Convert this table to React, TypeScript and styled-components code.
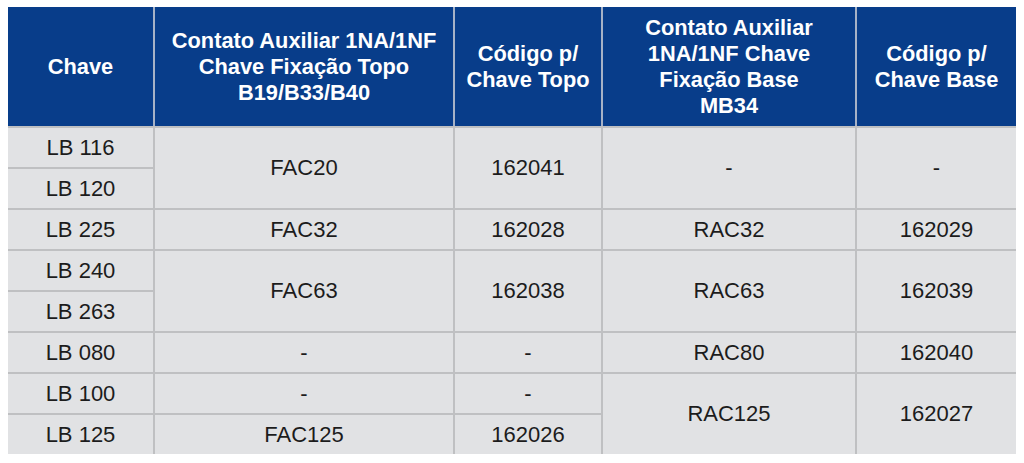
import React from "react";
import styled, { createGlobalStyle } from "styled-components";

const Global = createGlobalStyle`
  html, body { margin: 0; padding: 0; background: #ffffff; }
  body { font-family: "Liberation Sans", Arial, Helvetica, sans-serif; }
`;

const COLS = "145px 298px 146px 252px 159px";

const Page = styled.div`
  padding: 7px 8px 0 8px;
`;

const Table = styled.div`
  width: 1008px;
  display: flex;
  flex-direction: column;
  gap: 2px;
  background: #bfc0c2;
`;

const Head = styled.div`
  display: grid;
  grid-template-columns: ${COLS};
  column-gap: 2px;
  background: #a6b2c7;
`;

const HeadCell = styled.div`
  height: 119px;
  background: #083d8a;
  color: #ffffff;
  font-weight: bold;
  font-size: 21.8px;
  line-height: 26px;
  display: flex;
  align-items: center;
  justify-content: center;
  text-align: center;
`;

const Body = styled.div`
  display: grid;
  grid-template-columns: ${COLS};
  grid-template-rows: repeat(8, 39px);
  gap: 2px;
  background: #bfc0c2;
`;

const Cell = styled.div<{ $col: number; $row: number; $span?: number }>`
  grid-column: ${(p) => p.$col};
  grid-row: ${(p) => p.$row} / span ${(p) => p.$span ?? 1};
  background: #e1e2e4;
  color: #1c1c1c;
  font-size: 22px;
  display: flex;
  align-items: center;
  justify-content: center;
  text-align: center;
`;

type C = { col: number; row: number; span?: number; text: string };

const cells: C[] = [
  { col: 1, row: 1, text: "LB 116" },
  { col: 1, row: 2, text: "LB 120" },
  { col: 1, row: 3, text: "LB 225" },
  { col: 1, row: 4, text: "LB 240" },
  { col: 1, row: 5, text: "LB 263" },
  { col: 1, row: 6, text: "LB 080" },
  { col: 1, row: 7, text: "LB 100" },
  { col: 1, row: 8, text: "LB 125" },
  { col: 2, row: 1, span: 2, text: "FAC20" },
  { col: 2, row: 3, text: "FAC32" },
  { col: 2, row: 4, span: 2, text: "FAC63" },
  { col: 2, row: 6, text: "-" },
  { col: 2, row: 7, text: "-" },
  { col: 2, row: 8, text: "FAC125" },
  { col: 3, row: 1, span: 2, text: "162041" },
  { col: 3, row: 3, text: "162028" },
  { col: 3, row: 4, span: 2, text: "162038" },
  { col: 3, row: 6, text: "-" },
  { col: 3, row: 7, text: "-" },
  { col: 3, row: 8, text: "162026" },
  { col: 4, row: 1, span: 2, text: "-" },
  { col: 4, row: 3, text: "RAC32" },
  { col: 4, row: 4, span: 2, text: "RAC63" },
  { col: 4, row: 6, text: "RAC80" },
  { col: 4, row: 7, span: 2, text: "RAC125" },
  { col: 5, row: 1, span: 2, text: "-" },
  { col: 5, row: 3, text: "162029" },
  { col: 5, row: 4, span: 2, text: "162039" },
  { col: 5, row: 6, text: "162040" },
  { col: 5, row: 7, span: 2, text: "162027" },
];

export default function App() {
  return (
    <Page>
      <Global />
      <Table>
        <Head>
          <HeadCell>Chave</HeadCell>
          <HeadCell>
            Contato Auxiliar 1NA/1NF
            <br />
            Chave Fixação Topo
            <br />
            B19/B33/B40
          </HeadCell>
          <HeadCell>
            Código p/
            <br />
            Chave Topo
          </HeadCell>
          <HeadCell>
            Contato Auxiliar
            <br />
            1NA/1NF Chave
            <br />
            Fixação Base
            <br />
            MB34
          </HeadCell>
          <HeadCell>
            Código p/
            <br />
            Chave Base
          </HeadCell>
        </Head>
        <Body>
          {cells.map((c, i) => (
            <Cell key={i} $col={c.col} $row={c.row} $span={c.span}>
              {c.text}
            </Cell>
          ))}
        </Body>
      </Table>
    </Page>
  );
}
